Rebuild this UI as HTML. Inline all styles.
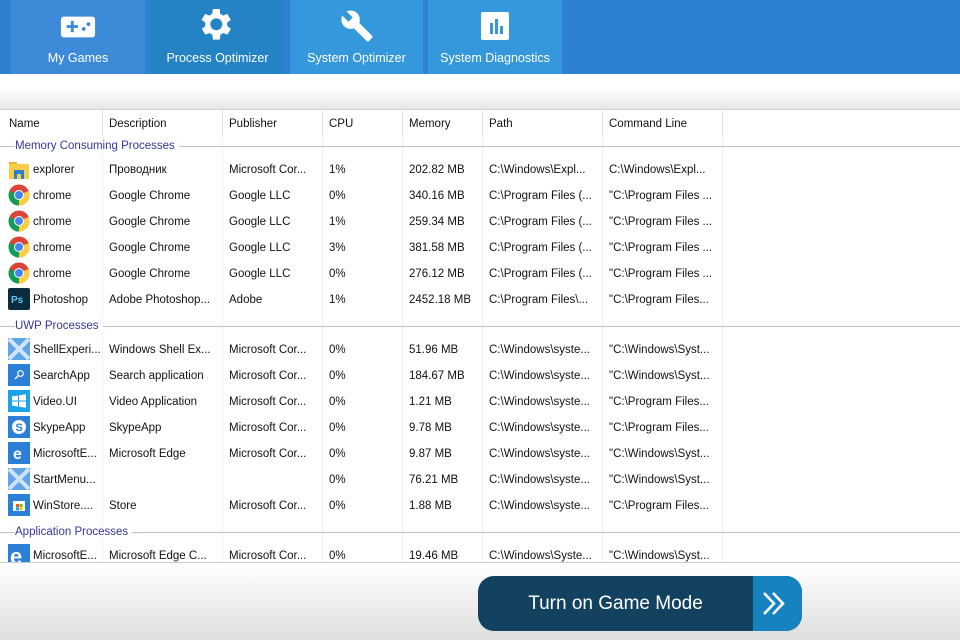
<!DOCTYPE html>
<html><head><meta charset="utf-8"><style>
*{margin:0;padding:0;box-sizing:border-box}
body{width:960px;height:640px;overflow:hidden;position:relative;font-family:"Liberation Sans",sans-serif;background:#fff}
#hdr{position:absolute;left:0;top:0;width:960px;height:74px;background:#2d80d2}
.tab{position:absolute;top:0;height:74px;color:#fff;font-size:12.5px;text-align:center}
.tab span{position:absolute;left:0;right:0;top:51px}
.tab svg{position:absolute;left:50%;top:9px;transform:translateX(-50%)}
#band{position:absolute;left:0;top:74px;width:960px;height:36px;background:linear-gradient(#fff 0%,#fff 40%,#e6e6e6 100%);border-bottom:1px solid #d0d0d0}
#tbl{position:absolute;left:0;top:110px;width:960px;height:453px;background:#fff;border-bottom:1px solid #c8ccd4;overflow:hidden}
.vl{position:absolute;top:0;width:1px;height:453px;background:#eef2f8}
.hv{position:absolute;top:0;width:1px;height:26px;background:#e2e2e2}
.c{position:absolute;font-size:11.5px;color:#111;white-space:nowrap;line-height:14px}
.g{position:absolute;left:15px;font-size:11.5px;color:#35359a;background:#fff;padding-right:4px;line-height:14px}
.gl{position:absolute;left:0;width:960px;height:1px;background:#b8c2d6}
.ic{position:absolute;left:8px;width:22px;height:22px}
#foot{position:absolute;left:0;top:564px;width:960px;height:76px;background:linear-gradient(#fff,#dedede)}
#btn{position:absolute;left:478px;top:576px;width:324px;height:55px;border-radius:16px;overflow:hidden;background:#134260}
#btn span{position:absolute;left:0;width:275px;top:17px;text-align:center;color:#fff;font-size:19px}
#btn div{position:absolute;left:275px;top:0;width:49px;height:55px;background:#1682bf}
</style></head><body>
<div id="hdr">
<div class="tab" style="left:11px;width:134px;background:#3d8ad8"><svg width="36" height="26" viewBox="0 0 38 26" style="top:14px"><rect x="1" y="2" width="36" height="22" rx="3" fill="#fff"/><rect x="7" y="11" width="12" height="3" fill="#3d8ad8"/><rect x="11.5" y="6.5" width="3" height="12" fill="#3d8ad8"/><circle cx="25" cy="15" r="2" fill="#3d8ad8"/><circle cx="30" cy="10" r="2" fill="#3d8ad8"/></svg><span>My Games</span></div>
<div class="tab" style="left:151px;width:133px;background:#2383c4"><svg width="34" height="34" viewBox="3 3 20 20" style="top:9px"><path fill="#fff" d="M19.4 13a7.5 7.5 0 000-2l2.1-1.6-2-3.5-2.5 1a7 7 0 00-1.7-1L15 3h-4l-.4 2.9a7 7 0 00-1.7 1l-2.5-1-2 3.5L6.6 11a7.5 7.5 0 000 2l-2.1 1.6 2 3.5 2.5-1a7 7 0 001.7 1L11 21h4l.4-2.9a7 7 0 001.7-1l2.5 1 2-3.5zM13 15.5a3.5 3.5 0 110-7 3.5 3.5 0 010 7z" transform="translate(-1 0)"/></svg><span>Process Optimizer</span></div>
<div class="tab" style="left:290px;width:133px;background:#3698dc"><svg width="34" height="34" viewBox="0 0 24 24" style="top:9px"><path fill="#fff" d="M22.7 19l-9.1-9.1c.9-2.3.4-5-1.5-6.9-2-2-5-2.4-7.4-1.3L9 6 6 9 1.6 4.7C.4 7.1.9 10.1 2.9 12.1c1.9 1.9 4.6 2.4 6.9 1.5l9.1 9.1c.4.4 1 .4 1.4 0l2.3-2.3c.5-.4.5-1.1.1-1.4z"/></svg><span>System Optimizer</span></div>
<div class="tab" style="left:428px;width:134px;background:#3698dc"><svg width="30" height="30" viewBox="0 0 30 30" style="top:11px"><rect x="1" y="1" width="28" height="28" rx="2" fill="#fff"/><rect x="10" y="12" width="3" height="11" fill="#3698dc"/><rect x="15" y="8" width="3" height="15" fill="#3698dc"/><rect x="20" y="15" width="3" height="8" fill="#3698dc"/></svg><span>System Diagnostics</span></div>
</div>
<div id="band"></div>
<div id="tbl">
<div class="vl" style="left:102px"></div><div class="vl" style="left:222px"></div><div class="vl" style="left:322px"></div><div class="vl" style="left:402px"></div><div class="vl" style="left:482px"></div><div class="vl" style="left:602px"></div><div class="vl" style="left:722px"></div>
<div style="position:absolute;left:0;top:0;width:723px;height:27px;background:#fff"></div>
<div class="hv" style="left:102px"></div><div class="hv" style="left:222px"></div><div class="hv" style="left:322px"></div><div class="hv" style="left:402px"></div><div class="hv" style="left:482px"></div><div class="hv" style="left:602px"></div><div class="hv" style="left:722px"></div>
<div class="c" style="left:9px;top:7px">Name</div><div class="c" style="left:109px;top:7px">Description</div><div class="c" style="left:229px;top:7px">Publisher</div><div class="c" style="left:329px;top:7px">CPU</div><div class="c" style="left:409px;top:7px">Memory</div><div class="c" style="left:489px;top:7px">Path</div><div class="c" style="left:609px;top:7px">Command Line</div>

<div class="gl" style="top:36px"></div><div class="g" style="top:29px">Memory Consuming Processes</div>
<div class="gl" style="top:216px"></div><div class="g" style="top:209px">UWP Processes</div>
<div class="gl" style="top:422px"></div><div class="g" style="top:415px">Application Processes</div>

<svg class="ic" style="top:49px" viewBox="0 0 22 22"><rect x="1" y="3" width="8" height="4" fill="#e8b830"/><rect x="1" y="5" width="20" height="15" fill="#f8cd4a"/><rect x="6" y="11" width="10" height="9" fill="#2a7fd0"/><rect x="9" y="15" width="4" height="5" fill="#f8cd4a"/></svg>
<svg class="ic" style="top:74px" viewBox="0 0 22 22"><circle cx="11" cy="11" r="10.5" fill="#db4437"/><path d="M11 11L1.9 16.2A10.5 10.5 0 0011 21.5zM11 11L1.9 16.2A10.5 10.5 0 0 1 1.5 7z" fill="#0f9d58"/><path d="M11 11L20.1 16.2A10.5 10.5 0 0 1 11 21.5zM11 11L20.1 16.2A10.5 10.5 0 0 0 20.6 7z" fill="#ffcd40"/><circle cx="11" cy="11" r="5" fill="#fff"/><circle cx="11" cy="11" r="4" fill="#4285f4"/></svg>
<svg class="ic" style="top:100px" viewBox="0 0 22 22"><circle cx="11" cy="11" r="10.5" fill="#db4437"/><path d="M11 11L1.9 16.2A10.5 10.5 0 0011 21.5zM11 11L1.9 16.2A10.5 10.5 0 0 1 1.5 7z" fill="#0f9d58"/><path d="M11 11L20.1 16.2A10.5 10.5 0 0 1 11 21.5zM11 11L20.1 16.2A10.5 10.5 0 0 0 20.6 7z" fill="#ffcd40"/><circle cx="11" cy="11" r="5" fill="#fff"/><circle cx="11" cy="11" r="4" fill="#4285f4"/></svg>
<svg class="ic" style="top:126px" viewBox="0 0 22 22"><circle cx="11" cy="11" r="10.5" fill="#db4437"/><path d="M11 11L1.9 16.2A10.5 10.5 0 0011 21.5zM11 11L1.9 16.2A10.5 10.5 0 0 1 1.5 7z" fill="#0f9d58"/><path d="M11 11L20.1 16.2A10.5 10.5 0 0 1 11 21.5zM11 11L20.1 16.2A10.5 10.5 0 0 0 20.6 7z" fill="#ffcd40"/><circle cx="11" cy="11" r="5" fill="#fff"/><circle cx="11" cy="11" r="4" fill="#4285f4"/></svg>
<svg class="ic" style="top:152px" viewBox="0 0 22 22"><circle cx="11" cy="11" r="10.5" fill="#db4437"/><path d="M11 11L1.9 16.2A10.5 10.5 0 0011 21.5zM11 11L1.9 16.2A10.5 10.5 0 0 1 1.5 7z" fill="#0f9d58"/><path d="M11 11L20.1 16.2A10.5 10.5 0 0 1 11 21.5zM11 11L20.1 16.2A10.5 10.5 0 0 0 20.6 7z" fill="#ffcd40"/><circle cx="11" cy="11" r="5" fill="#fff"/><circle cx="11" cy="11" r="4" fill="#4285f4"/></svg>
<svg class="ic" style="top:178px" viewBox="0 0 22 22"><rect x="0" y="0" width="22" height="22" rx="2" fill="#0b2c3f"/><text x="3" y="15" font-size="10" font-weight="bold" fill="#5ec6f7" font-family="Liberation Sans">Ps</text></svg>

<svg class="ic" style="top:228px" viewBox="0 0 22 22"><rect width="22" height="22" fill="#5fa5e8"/><path d="M1 1L21 21M21 1L1 21" stroke="#cfe4f7" stroke-width="4"/></svg>
<svg class="ic" style="top:254px" viewBox="0 0 22 22"><rect width="22" height="22" fill="#2b7fd6"/><circle cx="12.5" cy="9.5" r="2.8" fill="none" stroke="#fff" stroke-width="1.2"/><path d="M10.5 11.5L7 15" stroke="#fff" stroke-width="1.4"/></svg>
<svg class="ic" style="top:280px" viewBox="0 0 22 22"><rect width="22" height="22" fill="#1ba4e8"/><path d="M4 6.5l6-1v5H4zM11 5.3l7-1.1v6.3h-7zM4 11.5h6v5l-6-1zM11 11.5h7v6.3l-7-1.1z" fill="#fff"/></svg>
<svg class="ic" style="top:306px" viewBox="0 0 22 22"><rect width="22" height="22" fill="#2b7fd6"/><circle cx="11" cy="11" r="7" fill="#fff"/><text x="7.5" y="15" font-size="11" font-weight="bold" fill="#2b7fd6" font-family="Liberation Sans">S</text></svg>
<svg class="ic" style="top:332px" viewBox="0 0 22 22"><rect width="22" height="22" fill="#2b7fd6"/><text x="5" y="17" font-size="16" font-weight="bold" fill="#fff" font-family="Liberation Sans">e</text></svg>
<svg class="ic" style="top:358px" viewBox="0 0 22 22"><rect width="22" height="22" fill="#5fa5e8"/><path d="M1 1L21 21M21 1L1 21" stroke="#cfe4f7" stroke-width="4"/></svg>
<svg class="ic" style="top:384px" viewBox="0 0 22 22"><rect width="22" height="22" fill="#2b7fd6"/><rect x="5" y="7" width="12" height="10" fill="#fff"/><rect x="8" y="10" width="3" height="3" fill="#f25022"/><rect x="11.5" y="10" width="3" height="3" fill="#7fba00"/><rect x="8" y="13.3" width="3" height="3" fill="#00a4ef"/><rect x="11.5" y="13.3" width="3" height="3" fill="#ffb900"/></svg>
<svg class="ic" style="top:434px" viewBox="0 0 22 22"><rect width="22" height="22" fill="#2b7fd6"/><text x="2" y="20" font-size="22" font-weight="bold" fill="#fff" font-family="Liberation Sans">e</text></svg>

<div class="c" style="left:33px;top:53px">explorer</div><div class="c" style="left:109px;top:53px">Проводник</div><div class="c" style="left:229px;top:53px">Microsoft Cor...</div><div class="c" style="left:329px;top:53px">1%</div><div class="c" style="left:409px;top:53px">202.82 MB</div><div class="c" style="left:489px;top:53px">C:\Windows\Expl...</div><div class="c" style="left:609px;top:53px">C:\Windows\Expl...</div>
<div class="c" style="left:33px;top:79px">chrome</div><div class="c" style="left:109px;top:79px">Google Chrome</div><div class="c" style="left:229px;top:79px">Google LLC</div><div class="c" style="left:329px;top:79px">0%</div><div class="c" style="left:409px;top:79px">340.16 MB</div><div class="c" style="left:489px;top:79px">C:\Program Files (...</div><div class="c" style="left:609px;top:79px">"C:\Program Files ...</div>
<div class="c" style="left:33px;top:105px">chrome</div><div class="c" style="left:109px;top:105px">Google Chrome</div><div class="c" style="left:229px;top:105px">Google LLC</div><div class="c" style="left:329px;top:105px">1%</div><div class="c" style="left:409px;top:105px">259.34 MB</div><div class="c" style="left:489px;top:105px">C:\Program Files (...</div><div class="c" style="left:609px;top:105px">"C:\Program Files ...</div>
<div class="c" style="left:33px;top:131px">chrome</div><div class="c" style="left:109px;top:131px">Google Chrome</div><div class="c" style="left:229px;top:131px">Google LLC</div><div class="c" style="left:329px;top:131px">3%</div><div class="c" style="left:409px;top:131px">381.58 MB</div><div class="c" style="left:489px;top:131px">C:\Program Files (...</div><div class="c" style="left:609px;top:131px">"C:\Program Files ...</div>
<div class="c" style="left:33px;top:157px">chrome</div><div class="c" style="left:109px;top:157px">Google Chrome</div><div class="c" style="left:229px;top:157px">Google LLC</div><div class="c" style="left:329px;top:157px">0%</div><div class="c" style="left:409px;top:157px">276.12 MB</div><div class="c" style="left:489px;top:157px">C:\Program Files (...</div><div class="c" style="left:609px;top:157px">"C:\Program Files ...</div>
<div class="c" style="left:33px;top:183px">Photoshop</div><div class="c" style="left:109px;top:183px">Adobe Photoshop...</div><div class="c" style="left:229px;top:183px">Adobe</div><div class="c" style="left:329px;top:183px">1%</div><div class="c" style="left:409px;top:183px">2452.18 MB</div><div class="c" style="left:489px;top:183px">C:\Program Files\...</div><div class="c" style="left:609px;top:183px">"C:\Program Files...</div>

<div class="c" style="left:33px;top:233px">ShellExperi...</div><div class="c" style="left:109px;top:233px">Windows Shell Ex...</div><div class="c" style="left:229px;top:233px">Microsoft Cor...</div><div class="c" style="left:329px;top:233px">0%</div><div class="c" style="left:409px;top:233px">51.96 MB</div><div class="c" style="left:489px;top:233px">C:\Windows\syste...</div><div class="c" style="left:609px;top:233px">"C:\Windows\Syst...</div>
<div class="c" style="left:33px;top:259px">SearchApp</div><div class="c" style="left:109px;top:259px">Search application</div><div class="c" style="left:229px;top:259px">Microsoft Cor...</div><div class="c" style="left:329px;top:259px">0%</div><div class="c" style="left:409px;top:259px">184.67 MB</div><div class="c" style="left:489px;top:259px">C:\Windows\syste...</div><div class="c" style="left:609px;top:259px">"C:\Windows\Syst...</div>
<div class="c" style="left:33px;top:285px">Video.UI</div><div class="c" style="left:109px;top:285px">Video Application</div><div class="c" style="left:229px;top:285px">Microsoft Cor...</div><div class="c" style="left:329px;top:285px">0%</div><div class="c" style="left:409px;top:285px">1.21 MB</div><div class="c" style="left:489px;top:285px">C:\Windows\syste...</div><div class="c" style="left:609px;top:285px">"C:\Program Files...</div>
<div class="c" style="left:33px;top:311px">SkypeApp</div><div class="c" style="left:109px;top:311px">SkypeApp</div><div class="c" style="left:229px;top:311px">Microsoft Cor...</div><div class="c" style="left:329px;top:311px">0%</div><div class="c" style="left:409px;top:311px">9.78 MB</div><div class="c" style="left:489px;top:311px">C:\Windows\syste...</div><div class="c" style="left:609px;top:311px">"C:\Program Files...</div>
<div class="c" style="left:33px;top:337px">MicrosoftE...</div><div class="c" style="left:109px;top:337px">Microsoft Edge</div><div class="c" style="left:229px;top:337px">Microsoft Cor...</div><div class="c" style="left:329px;top:337px">0%</div><div class="c" style="left:409px;top:337px">9.87 MB</div><div class="c" style="left:489px;top:337px">C:\Windows\syste...</div><div class="c" style="left:609px;top:337px">"C:\Windows\Syst...</div>
<div class="c" style="left:33px;top:363px">StartMenu...</div><div class="c" style="left:329px;top:363px">0%</div><div class="c" style="left:409px;top:363px">76.21 MB</div><div class="c" style="left:489px;top:363px">C:\Windows\syste...</div><div class="c" style="left:609px;top:363px">"C:\Windows\Syst...</div>
<div class="c" style="left:33px;top:389px">WinStore....</div><div class="c" style="left:109px;top:389px">Store</div><div class="c" style="left:229px;top:389px">Microsoft Cor...</div><div class="c" style="left:329px;top:389px">0%</div><div class="c" style="left:409px;top:389px">1.88 MB</div><div class="c" style="left:489px;top:389px">C:\Windows\syste...</div><div class="c" style="left:609px;top:389px">"C:\Program Files...</div>

<div class="c" style="left:33px;top:439px">MicrosoftE...</div><div class="c" style="left:109px;top:439px">Microsoft Edge C...</div><div class="c" style="left:229px;top:439px">Microsoft Cor...</div><div class="c" style="left:329px;top:439px">0%</div><div class="c" style="left:409px;top:439px">19.46 MB</div><div class="c" style="left:489px;top:439px">C:\Windows\Syste...</div><div class="c" style="left:609px;top:439px">"C:\Windows\Syst...</div>
</div>
<div id="foot"></div>
<div id="btn"><span>Turn on Game Mode</span><div><svg width="49" height="55" viewBox="0 0 49 55"><path d="M11 17l10 10.5L11 38M20 17l10 10.5L20 38" fill="none" stroke="#fff" stroke-width="2.6"/></svg></div></div>
</body></html>
